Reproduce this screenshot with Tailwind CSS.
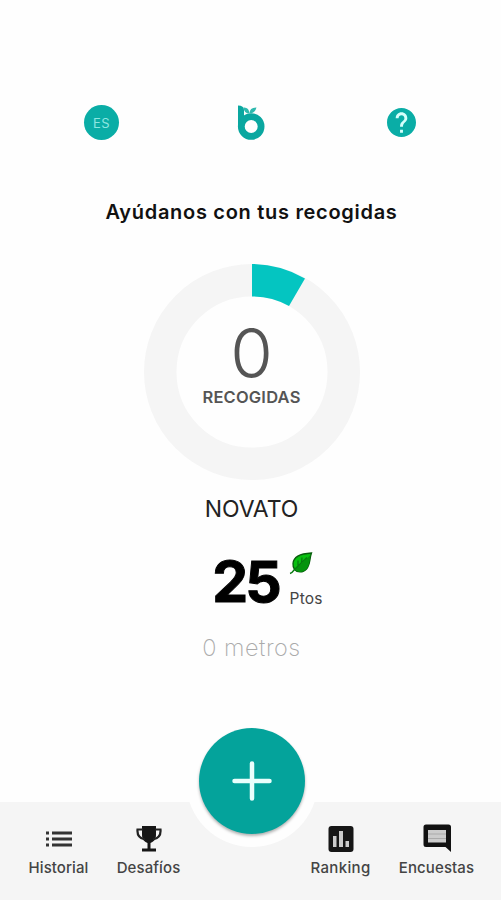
<!DOCTYPE html>
<html lang="es">
<head>
    <meta charset="UTF-8">
    <meta name="viewport" content="width=device-width, initial-scale=1.0">
    <title>Recogidas</title>
    <script src="https://cdn.jsdelivr.net/npm/@tailwindcss/browser@4"></script>
</head>
<body class="bg-[#fefefe] h-[900px] flex flex-col overflow-hidden font-['Inter','Noto_Sans',sans-serif] whitespace-nowrap">
    <header class="flex items-center justify-between pt-[104px] pl-[84px] pr-[85px]">
        <button class="w-[35px] h-[35px] rounded-full bg-[#0aada6] text-[#8de6e0] text-[13px] tracking-[0.4px] flex items-center justify-center pt-[2px]">ES</button>
        <svg class="w-[28px] h-[37px] ml-[-5px]" viewBox="0 0 28 37">
            <path d="M1 1.500 Q7 1.500 7 6 V22 H1Z" fill="#0aa7a0"/>
            <circle cx="14.200" cy="22.500" r="9.900" fill="none" stroke="#0aa7a0" stroke-width="6.800"/>
            <path d="M6.500 3.500 Q12 3 12.500 9.500 Q7 9.500 6.500 3.500Z M12.500 9.500 Q12.500 3.500 19.500 3.500 Q18 9.500 12.500 9.500Z" fill="#2fb9ae"/>
        </svg>
        <button>
            <svg class="w-[29px] h-[29px] block" viewBox="2 2 20 20" fill="#0aada6">
                <circle cx="12" cy="12" r="9" fill="#d5fffc"/>
                <path d="M12 2C6.480 2 2 6.480 2 12s4.480 10 10 10 10-4.480 10-10S17.520 2 12 2zm1 17h-2v-2h2v2zm2.070-7.750l-.9.920C13.450 12.900 13 13.500 13 15h-2v-.5c0-1.100.450-2.100 1.170-2.830l1.240-1.260c.370-.360.590-.860.590-1.410 0-1.100-.9-2-2-2s-2 .9-2 2H8c0-2.210 1.790-4 4-4s4 1.790 4 4c0 .880-.360 1.680-.930 2.250z"/>
            </svg>
        </button>
    </header>

    <main class="flex flex-col items-center pl-[2px]">
        <h1 class="mt-[56px] text-[20px] leading-[30px] font-semibold tracking-[0.7px] text-[#111]">Ayúdanos con tus recogidas</h1>

        <div class="mt-[37px] grid w-[216px] h-[216px]">
            <svg class="col-start-1 row-start-1" viewBox="0 0 216 216">
                <circle cx="108" cy="108" r="91.750" fill="none" stroke="#f5f5f5" stroke-width="32.500"/>
                <path d="M108 0A108 108 0 0 1 161 14.500L145 42A75.500 75.500 0 0 0 108 32.500Z" fill="#04c5c1"/>
            </svg>
            <div class="col-start-1 row-start-1 flex flex-col items-center pt-[56px] text-[#555]">
                <span class="text-[69px] leading-[67px] font-light">0</span>
                <span class="text-[16.500px] leading-[20px] font-semibold tracking-[0.2px]">RECOGIDAS</span>
            </div>
        </div>

        <p class="mt-[14px] text-[23px] leading-[30px] tracking-[-0.1px] text-[#222]">NOVATO</p>

        <div class="mt-[25px] flex pl-[32px]">
            <span class="text-[57px] leading-[66px] font-bold tracking-[-3px] text-black [-webkit-text-stroke:1px_#000]">25</span>
            <div class="ml-[11px] flex flex-col">
                <svg class="mt-[3px] ml-[-1px] w-[24px] h-[24px]" viewBox="0 0 24 24">
                    <path d="M22.500 1C14 1.500 4.500 4 4 11.500C3.800 14 4.500 16 5.500 17.500C8 20.500 14 21 17.500 17C21.500 12.500 20.500 6 22.500 1Z" fill="#08c010" stroke="#075c0c" stroke-width="1.300"/>
                    <path d="M5.500 17.500C8 20.500 14 21 17.500 17C21 13 20.500 7 21.500 3Q15 10 5.500 17.500Z" fill="#05940d"/>
                    <path d="M1 21.500Q3 21 5.500 17.500Q11 12 18 5.500M9 14L9 8.500M12.500 11L13 5.500" fill="none" stroke="#087a10" stroke-width="1.300"/>
                </svg>
                <span class="mt-[12px] text-[15.500px] leading-[22px] tracking-[0.2px] text-[#444]">Ptos</span>
            </div>
        </div>

        <p class="mt-[18px] text-[23.500px] leading-[30px] font-extralight tracking-[0.5px] text-[#aaa]">0 metros</p>
    </main>

    <nav class="relative mt-auto h-[98px] bg-[#f5f5f5] flex pt-[22px] text-[15px] leading-[20px] font-medium text-[#444]">
        <a class="ml-[18px] w-[81px] flex flex-col items-center">
            <svg class="w-[26px] h-[30px]" viewBox="0 0 26 30" fill="#333">
                <path d="M0 7.500h3v3H0zM6 7.500h20v3H6zM0 13.500h3v3H0zM6 13.500h20v3H6zM0 19.500h3v3H0zM6 19.500h20v3H6z"/>
            </svg>
            <span class="mt-[4px] tracking-[0.1px]">Historial</span>
        </a>
        <a class="ml-[9px] w-[81px] flex flex-col items-center">
            <svg class="w-[26px] h-[30px]" viewBox="0 0 26 30">
                <path d="M6 2h14v9c0 5-3 7-5.500 8v5.500H20v3H6v-3h5.500V19C9 18 6 16 6 11z" fill="#161616"/>
                <path d="M7 5.500H1.500C1 11 4 14.500 9 15.500M19 5.500h5.500C25 11 22 14.500 17 15.500" fill="none" stroke="#222" stroke-width="2.200"/>
            </svg>
            <span class="mt-[4px] tracking-[0.1px]">Desafíos</span>
        </a>
        <a class="ml-[111px] w-[81px] flex flex-col items-center">
            <svg class="w-[26px] h-[30px]" viewBox="0 0 26 30">
                <rect x=".5" y="2" width="25" height="26" rx="3" fill="#161616"/>
                <path d="M5 12h3.500v11H5zM11 7h4v16h-4zM17.500 17h3.500v6h-3.500z" fill="#ccc"/>
            </svg>
            <span class="mt-[4px] tracking-[0.35px]">Ranking</span>
        </a>
        <a class="ml-[15px] w-[81px] flex flex-col items-center">
            <svg class="w-[28px] h-[30px]" viewBox="0 0 28 30">
                <path d="M3 .500H25.500Q28 .500 28 3V28L22.500 23H3Q.500 23 .500 20.500V3Q.500 .500 3 .500Z" fill="#111"/>
                <path d="M5 6h18v12.500H5z" fill="#ccc"/>
                <path d="M5 10h18M5 14.500h18" stroke="#aaa" stroke-width="1"/>
            </svg>
            <span class="mt-[4px] tracking-[0.1px]">Encuestas</span>
        </a>
        <!-- floating add button -->
        <div class="absolute left-[186px] top-[-87px] w-[132px] h-[132px] rounded-full bg-[#fefefe] flex items-center justify-center">
            <button class="w-[106px] h-[106px] rounded-full bg-[#04a39b] shadow-[0_2px_3px_rgba(0,0,0,0.3)] flex items-center justify-center">
                <svg class="w-[40px] h-[40px]" viewBox="0 0 40 40" fill="none" stroke="#e9fffc" stroke-width="4.500" stroke-linecap="round">
                    <path d="M20 2.500V37.500M2.500 20H37.500"/>
                </svg>
            </button>
        </div>
    </nav>
</body>
</html>
